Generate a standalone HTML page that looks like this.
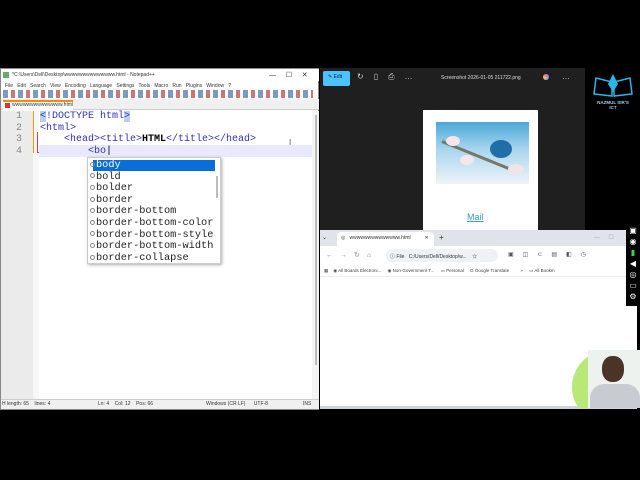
<!DOCTYPE html>
<html><head><style>
*{margin:0;padding:0;box-sizing:border-box}
body{width:640px;height:480px;background:#000;position:relative;overflow:hidden;font-family:"Liberation Sans",sans-serif}
.a{position:absolute}
.mono{font-family:"Liberation Mono",monospace;font-size:10px;white-space:pre}
.t{color:#3030c0}
.item{position:absolute;left:2px;height:11.6px;line-height:11.6px;font-family:"Liberation Mono",monospace;font-size:10.3px;color:#222;white-space:pre}
.item i{display:inline-block;width:5px;height:5px;border:1px solid #888;border-radius:50%;margin-right:1px;vertical-align:middle}
.sm{font-size:5px;color:#333;white-space:nowrap}
</style></head><body>

<!-- Notepad++ -->
<div class="a" style="left:0;top:68px;width:319px;height:342px;background:#fff;border:1px solid #888">
  <div class="a" style="left:0;top:0;width:318px;height:12px;background:#fff"></div>
  <div class="a" style="left:2px;top:3px;width:6px;height:6px;background:#6a6"></div>
  <div class="a sm" style="left:11px;top:3px">*C:\Users\Dell\Desktop\wwwwwwwwwwwwww.html - Notepad++</div>
  <div class="a sm" style="left:268px;top:2px;font-size:7px">—&nbsp;&nbsp;&nbsp;&nbsp;&nbsp;☐&nbsp;&nbsp;&nbsp;&nbsp;&nbsp;✕</div>
  <div class="a sm" style="left:4px;top:14px">File&nbsp;&nbsp; Edit&nbsp;&nbsp; Search&nbsp;&nbsp; View&nbsp;&nbsp; Encoding&nbsp;&nbsp; Language&nbsp;&nbsp; Settings&nbsp;&nbsp; Tools&nbsp;&nbsp; Macro&nbsp;&nbsp; Run&nbsp;&nbsp; Plugins&nbsp;&nbsp; Window&nbsp;&nbsp; ?</div>
  <div class="a" style="left:2px;top:21px;width:310px;height:8px;background:repeating-linear-gradient(90deg,#7a9ac0 0 5px,#fff 5px 8px,#c77 8px 12px,#fff 12px 15px)"></div>
  <div class="a" style="left:0;top:30px;width:318px;height:11px;background:#f0f0f0;border-bottom:1px solid #ccc"></div>
  <div class="a" style="left:2px;top:31px;width:70px;height:10px;background:#fff;border-top:2px solid #f80"></div>
  <div class="a" style="left:4px;top:34px;width:5px;height:5px;background:#d33"></div>
  <div class="a sm" style="left:11px;top:33px">wwwwwwwwwwwwww.html</div>
  <div class="a" style="left:0;top:42px;width:32px;height:288px;background:#ebebeb"></div>
  <div class="a" style="left:32px;top:42px;width:6px;height:288px;background:#f7f7f7"></div>
  <div class="a" style="left:32px;top:42px;width:1px;height:42px;background:#f90"></div>
  <div class="a" style="left:36px;top:63px;width:1px;height:20px;background:#c44"></div>
  <div class="a" style="left:36px;top:83px;width:4px;height:1px;background:#c44"></div>
  <div class="a" style="left:38px;top:76px;width:273px;height:12px;background:#e8e8ff"></div>
  <div class="a" style="left:311px;top:42px;width:7px;height:288px;background:#f4f4f4"></div>
  <div class="a" style="left:314px;top:46px;width:2px;height:250px;background:#bbb"></div>
  <div class="a mono" style="left:15px;top:42px;line-height:11.6px;color:#888">1
2
3
4</div>
  <div class="a mono" style="left:39px;top:42px;line-height:11.6px"><span class="t"><span style="background:#b8d0ee">&lt;</span>!DOCTYPE html<span style="background:#b8d0ee">&gt;</span></span>
<span class="t">&lt;html&gt;</span>
    <span class="t">&lt;head&gt;&lt;title&gt;</span><b>HTML</b><span class="t">&lt;/title&gt;&lt;/head&gt;</span>
        <span class="t">&lt;bo</span>|</div>
  <div class="a" style="left:288px;top:69px;font-size:8px;color:#555">I</div>
  <div class="a" style="left:86px;top:88px;width:134px;height:107px;background:#fff;border:1px solid #ccc;box-shadow:1px 1px 3px #aaa">
    <div class="a" style="left:5px;top:2px;width:122px;height:11px;background:#0a6ed8"></div>
    <div class="a" style="left:128px;top:18px;width:2px;height:22px;background:#bbb"></div>
    <div class="item" style="top:2px"><i></i><span style="color:#fff">body</span></div>
    <div class="item" style="top:13.6px"><i></i>bold</div>
    <div class="item" style="top:25.2px"><i></i>bolder</div>
    <div class="item" style="top:36.8px"><i></i>border</div>
    <div class="item" style="top:48.4px"><i></i>border-bottom</div>
    <div class="item" style="top:60px"><i></i>border-bottom-color</div>
    <div class="item" style="top:71.6px"><i></i>border-bottom-style</div>
    <div class="item" style="top:83.2px"><i></i>border-bottom-width</div>
    <div class="item" style="top:94.8px"><i></i>border-collapse</div>
  </div>
  <div class="a" style="left:0;top:330px;width:318px;height:10px;background:#f0f0f0;border-top:1px solid #ccc"></div>
  <div class="a sm" style="left:1px;top:332px">H length: 65&nbsp;&nbsp;&nbsp; lines: 4</div>
  <div class="a sm" style="left:97px;top:332px">Ln: 4&nbsp;&nbsp;&nbsp; Col: 12&nbsp;&nbsp;&nbsp; Pos: 66</div>
  <div class="a sm" style="left:205px;top:332px">Windows (CR LF)&nbsp;&nbsp;&nbsp;&nbsp;&nbsp; UTF-8</div>
  <div class="a sm" style="left:302px;top:332px">INS</div>
</div>

<!-- Photos viewer -->
<div class="a" style="left:320px;top:68px;width:265px;height:162px;background:#1f1f1f"></div>
<div class="a" style="left:323px;top:71px;width:27px;height:15px;background:#4cc2ff;border-radius:2px"></div>
<div class="a" style="left:328px;top:74px;font-size:5px;color:#123">✎ Edit</div>
<div class="a" style="left:357px;top:72px;font-size:8px;color:#ccc;letter-spacing:10px">↻▯⎙…</div>
<div class="a" style="left:441px;top:75px;font-size:5px;color:#ddd">Screenshot 2026-01-05 211722.png</div>
<div class="a" style="left:543px;top:74px;width:6px;height:6px;border-radius:50%;background:conic-gradient(#f6a,#6af,#fc4,#f6a)"></div>
<div class="a" style="left:562px;top:72px;font-size:8px;color:#ccc">…</div>
<div class="a" style="left:423px;top:110px;width:115px;height:120px;background:#fff"></div>
<div class="a" style="left:436px;top:122px;width:93px;height:62px;background:linear-gradient(180deg,#4aa8d8,#aad6ee 45%,#eef4f8)"></div>
<div class="a" style="left:442px;top:140px;width:80px;height:3px;background:#776;transform:rotate(22deg);transform-origin:left"></div>
<div class="a" style="left:490px;top:140px;width:22px;height:18px;border-radius:50%;background:#1f6ea8"></div>
<div class="a" style="left:446px;top:136px;width:14px;height:10px;border-radius:50%;background:#f4e6ea"></div>
<div class="a" style="left:460px;top:155px;width:14px;height:10px;border-radius:50%;background:#f4e6ea"></div>
<div class="a" style="left:508px;top:164px;width:16px;height:10px;border-radius:50%;background:#f0e4e6"></div>
<div class="a" style="left:467px;top:212px;font-size:9px;color:#3aa0c8;text-decoration:underline">Mail</div>

<div class="a" style="left:585px;top:68px;width:55px;height:46px;background:#000"></div>
<svg class="a" style="left:592px;top:70px" width="42" height="30" viewBox="0 0 42 30"><path d="M2 24 L20 26 L20 12 L4 8Z M40 24 L22 26 L22 12 L38 8Z" fill="none" stroke="#2bb5e8" stroke-width="1.5"/><path d="M21 4 L26 14 L21 22 L16 14Z" fill="#2bb5e8"/></svg>
<div class="a" style="left:589px;top:100px;width:48px;text-align:center;font-size:4.5px;font-weight:bold;color:#9ce;line-height:5px">NAZMUL SIR'S<br>ICT</div>

<!-- Browser -->
<div class="a" style="left:320px;top:230px;width:317px;height:178px;background:#fff"></div>
<div class="a" style="left:320px;top:230px;width:317px;height:16px;background:#dfe3ea"></div>
<div class="a" style="left:337px;top:232px;width:97px;height:14px;background:#fff;border-radius:4px 4px 0 0"></div>
<div class="a" style="left:322px;top:234px;font-size:6px;color:#333">⌄</div>
<div class="a" style="left:341px;top:235px;font-size:5px;color:#333">◎&nbsp;&nbsp; wwwwwwwwwwwwww.html&nbsp;&nbsp;&nbsp;&nbsp;&nbsp;&nbsp;&nbsp;&nbsp;&nbsp; ✕</div>
<div class="a" style="left:439px;top:233px;font-size:8px;color:#333">+</div>
<div class="a" style="left:594px;top:234px;font-size:6px;color:#aaa">—&nbsp;&nbsp;&nbsp;&nbsp; ☐</div>
<div class="a" style="left:320px;top:246px;width:317px;height:18px;background:#fff"></div>
<div class="a" style="left:326px;top:251px;font-size:7px;color:#888;letter-spacing:7px">←→↻⌂</div>
<div class="a" style="left:386px;top:249px;width:112px;height:13px;background:#eef1f5;border-radius:7px"></div>
<div class="a" style="left:390px;top:253px;font-size:5px;color:#333">ⓘ File&nbsp;&nbsp; C:/Users/Dell/Desktop/w...&nbsp;&nbsp;&nbsp; ☆</div>
<div class="a" style="left:508px;top:251px;font-size:6px;color:#555;letter-spacing:9px">▣◫⊂▤◧◷</div>
<div class="a" style="left:320px;top:264px;width:317px;height:13px;background:#fff;border-bottom:1px solid #eee"></div>
<div class="a" style="left:324px;top:268px;font-size:4.5px;color:#444;white-space:nowrap">▦&nbsp;&nbsp;&nbsp;&nbsp;◉ All Boards Electroni...&nbsp;&nbsp;&nbsp;&nbsp;&nbsp;◉ Non-Government T...&nbsp;&nbsp;&nbsp;&nbsp;&nbsp;▭ Personal&nbsp;&nbsp;&nbsp;&nbsp;&nbsp;G Google Translate&nbsp;&nbsp;&nbsp;&nbsp;&nbsp;&nbsp;&nbsp;&nbsp;&nbsp;»&nbsp;&nbsp;&nbsp;&nbsp;&nbsp;▭ All Bookm</div>
<div class="a" style="left:320px;top:406px;width:317px;height:3px;background:#cfd4da"></div>

<div class="a" style="left:572px;top:350px;width:74px;height:74px;border-radius:50%;background:#b8e878;clip-path:inset(0 0 16px 0)"></div>
<div class="a" style="left:588px;top:350px;width:52px;height:58px;background:#eef2ee"></div>
<div class="a" style="left:602px;top:356px;width:22px;height:26px;border-radius:45%;background:#4a3426"></div>
<div class="a" style="left:590px;top:384px;width:50px;height:24px;border-radius:14px 14px 0 0;background:#c8ccd2"></div>

<div class="a" style="left:626px;top:223px;width:14px;height:83px;background:#000"></div>
<div class="a" style="left:628px;top:225px;font-size:8px;color:#fff;line-height:11px;text-align:center;width:10px">▣<br>◉<br><span style="color:#4c4">▮</span><br>◀<br>◎<br>▭<br>⚙</div>

</body></html>
